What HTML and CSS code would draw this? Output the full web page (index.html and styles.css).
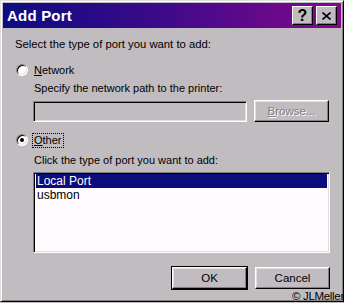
FILE: index.html
```html
<!DOCTYPE html>
<html lang="en">
<head>
  <meta charset="UTF-8">
  <meta name="viewport" content="width=device-width, initial-scale=1.0">
  <title>Add Port</title>
  <link rel="stylesheet" href="styles.css">
</head>
<body>
  <div class="window">
    <div class="titlebar">
      <span class="title">Add Port</span>
      <div class="title-buttons">
        <button class="tb-btn help">?</button>
        <button class="tb-btn close">
          <svg width="9" height="8" viewBox="0 0 9 8"><path d="M0.5 0.5 L8.5 7.5 M8.5 0.5 L0.5 7.5" stroke="#000" stroke-width="1.6"/></svg>
        </button>
      </div>
    </div>

    <div class="content">
      <p class="intro">Select the type of port you want to add:</p>

      <div class="radio-row network">
        <span class="radio"></span>
        <span class="radio-label"><u>N</u>etwork</span>
      </div>
      <div class="sub">
        <p class="hint">Specify the network path to the printer:</p>
        <div class="path-row">
          <div class="field"></div>
          <button class="btn disabled"><u>B</u>rowse...</button>
        </div>
      </div>

      <div class="radio-row other">
        <span class="radio checked"></span>
        <span class="radio-label focused"><u>O</u>ther</span>
      </div>
      <div class="sub">
        <p class="hint">Click the type of port you want to add:</p>
        <ul class="port-list">
          <li class="selected">Local Port</li>
          <li>usbmon</li>
        </ul>
      </div>

      <div class="actions">
        <button class="btn default">OK</button>
        <button class="btn">Cancel</button>
      </div>
    </div>
  </div>
  <span class="credit">© JLMeller</span>
</body>
</html>
```

FILE: styles.css
```css
body {
  margin: 0;
  font-family: "Liberation Sans", Arial, sans-serif;
  font-size: 11px;
  color: #000;
  background: #c0bcc0;
}
.window {
  position: relative;
  width: 344px;
  height: 302px;
  box-sizing: border-box;
  background: #c0bcc0;
  border: 1px solid;
  border-color: #dfdfdf #000 #000 #dfdfdf;
  padding: 2px;
  box-shadow: inset 1px 1px #fff, inset -1px -1px #808080;
}
.titlebar {
  height: 25px;
  display: flex;
  align-items: center;
  justify-content: space-between;
  padding: 0 4px;
  background: linear-gradient(to right, #0c0c80 0%, #3a0a8a 45%, #84088a 100%);
}
.title {
  color: #fff;
  font-weight: bold;
  font-size: 15px;
  letter-spacing: 0.2px;
}
.title-buttons {
  display: flex;
  gap: 3px;
}
.tb-btn {
  width: 21px;
  height: 19px;
  padding: 0;
  display: flex;
  align-items: center;
  justify-content: center;
  background: #c0bcc0;
  border: 1px solid;
  border-color: #fff #000 #000 #fff;
  box-shadow: inset -1px -1px #808080;
  font-family: "Liberation Sans", Arial, sans-serif;
  font-weight: bold;
  font-size: 16px;
  line-height: 1;
}
.content {
  padding: 10px 10px 0 12px;
}
p {
  margin: 0;
  line-height: 13px;
}
.intro {
  font-size: 11.3px;
}
.radio-row {
  display: flex;
  align-items: center;
  height: 14px;
  margin-left: 1px;
}
.radio-row.network {
  margin-top: 12px;
}
.radio-row.other {
  margin-top: 11px;
}
.radio {
  width: 12px;
  height: 12px;
  box-sizing: border-box;
  border-radius: 50%;
  background: #fff;
  border: 1px solid;
  border-color: #808080 #fff #fff #808080;
  box-shadow: inset 1px 1px #000, inset -1px -1px #dfdfdf;
  position: relative;
}
.radio.checked::after {
  content: '';
  position: absolute;
  left: 3px;
  top: 3px;
  width: 4px;
  height: 4px;
  border-radius: 50%;
  background: #000;
}
.radio-label {
  margin-left: 4px;
  padding: 0 1px;
  line-height: 13px;
  border: 1px dotted transparent;
}
.radio-label.focused {
  border-color: #000;
}
.sub {
  margin-left: 18px;
  width: 297px;
}
.network + .sub .hint {
  margin-top: 5px;
  padding-left: 1px;
}
.other + .sub .hint {
  margin-top: 7px;
  padding-left: 1px;
}
.path-row {
  display: flex;
  align-items: center;
  gap: 7px;
  margin-top: 5px;
}
.field {
  width: 214px;
  height: 21px;
  box-sizing: border-box;
  border: 1px solid;
  border-color: #808080 #fff #fff #808080;
  box-shadow: inset 1px 1px #000, inset -1px -1px #dfdfdf;
  background: #c0bcc0;
}
.btn {
  width: 75px;
  height: 22px;
  padding: 0;
  background: #c0bcc0;
  font-family: "Liberation Sans", Arial, sans-serif;
  font-size: 11.5px;
  color: #000;
  border: 1px solid;
  border-color: #fff #000 #000 #fff;
  box-shadow: inset -1px -1px #808080, inset 1px 1px #dfdfdf;
}
.btn.disabled {
  color: #808080;
  text-shadow: 1px 1px #fff;
}
.btn.default {
  outline: 1px solid #000;
}
.port-list {
  list-style: none;
  margin: 5px 0 0;
  padding: 1px 2px;
  height: 81px;
  box-sizing: border-box;
  background: #fffbff;
  border: 1px solid;
  border-color: #808080 #fff #fff #808080;
  box-shadow: inset 1px 1px #000, inset -1px -1px #dfdfdf;
  font-size: 12px;
}
.port-list li {
  height: 14px;
  line-height: 14px;
  padding-left: 1px;
}
.port-list li.selected {
  background: #0c0c7c;
  color: #fff;
}
.actions {
  display: flex;
  justify-content: flex-end;
  gap: 8px;
  margin-top: 14px;
  padding-right: 1px;
}
.credit {
  position: absolute;
  right: 0;
  top: 290px;
  font-size: 11.5px;
  line-height: 13px;
  letter-spacing: -0.3px;
}
```
